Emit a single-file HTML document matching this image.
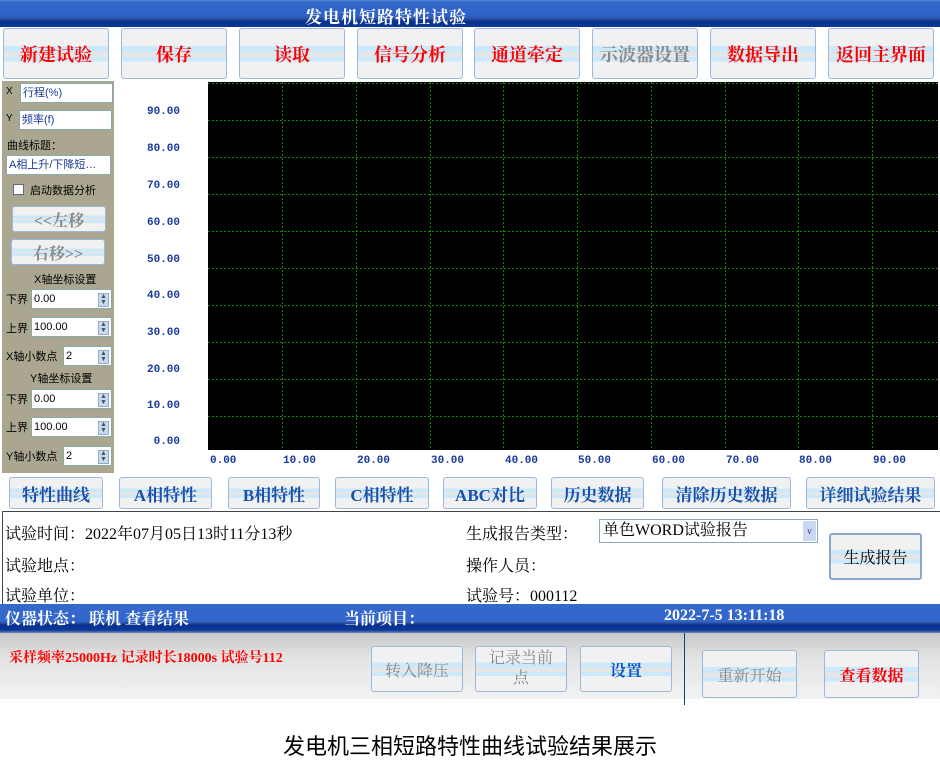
<!DOCTYPE html>
<html><head><meta charset="utf-8"><style>
*{margin:0;padding:0;box-sizing:border-box}
body{width:940px;height:765px;background:#fff;position:relative;overflow:hidden;font-family:"Liberation Serif","Noto Serif CJK SC","Noto Sans CJK SC",serif}
.a{position:absolute}
.btn{position:absolute;border:1px solid #9ab8dc;border-radius:3px;background:linear-gradient(#f1f1f1 0,#f1f1f1 35%,#cbe9fb 35%,#cbe9fb 47%,#e6e6e6 47%,#e6e6e6 57%,#cbe9fb 57%,#cbe9fb 66%,#f1f1f1 66%);display:flex;align-items:center;justify-content:center;font-weight:bold;white-space:nowrap}
.r{color:#f00}.g{color:#888}.b{color:#1a4fa8}
.tb{font-size:18px}
.sm{font-size:11px;font-family:"Liberation Sans","Noto Sans CJK SC",sans-serif;color:#000}
.in{position:absolute;background:#fff;border:1px solid #8aa;font-size:11px;font-family:"Liberation Sans","Noto Sans CJK SC",sans-serif;padding-left:2px;line-height:18px}
.sp{position:absolute;right:2px;top:3px;width:11px;height:14px;background:#c9d9ef;border:1px solid #9ab;font-size:7px;line-height:6px;text-align:center;color:#456}
.yl{position:absolute;left:140px;font-size:11px;font-weight:bold;color:#1a3a9a;font-family:"Liberation Mono",monospace;width:40px;text-align:right}
.xl{position:absolute;top:455px;font-size:11px;font-weight:bold;color:#1a3a9a;font-family:"Liberation Mono",monospace}
.it{position:absolute;font-size:16px;color:#000}
</style></head><body>
<div class="a" style="left:0;top:0;width:940px;height:27px;background:linear-gradient(#5a86d8 0,#3467c9 8%,#2f62c6 60%,#2a4f9a 70%,#083090 80%,#0a3898 100%)"></div>
<div class="a" style="left:305px;top:3px;font-size:17px;font-weight:bold;color:#fff;letter-spacing:1px">发电机短路特性试验</div>

<div class="btn r tb" style="left:3px;top:28px;width:106px;height:51px">新建试验</div>
<div class="btn r tb" style="left:121px;top:28px;width:106px;height:51px">保存</div>
<div class="btn r tb" style="left:239px;top:28px;width:106px;height:51px">读取</div>
<div class="btn r tb" style="left:357px;top:28px;width:106px;height:51px">信号分析</div>
<div class="btn r tb" style="left:474px;top:28px;width:106px;height:51px">通道牵定</div>
<div class="btn g tb" style="left:592px;top:28px;width:106px;height:51px">示波器设置</div>
<div class="btn r tb" style="left:710px;top:28px;width:106px;height:51px">数据导出</div>
<div class="btn r tb" style="left:828px;top:28px;width:106px;height:51px">返回主界面</div>

<div class="a" style="left:2px;top:81px;width:112px;height:392px;background:#aaa690"></div>
<div class="a sm" style="left:6px;top:86px;font-size:10px">X</div>
<div class="in" style="left:20px;top:83px;width:93px;height:20px;color:#1a3a9a">行程(%)</div>
<div class="a sm" style="left:6px;top:113px;font-size:10px">Y</div>
<div class="in" style="left:19px;top:110px;width:93px;height:20px;color:#1a3a9a">频率(f)</div>
<div class="a sm" style="left:7px;top:137px">曲线标题：</div>
<div class="in" style="left:6px;top:155px;width:105px;height:20px;color:#1a3a9a">A相上升/下降短…</div>
<div class="a" style="left:13px;top:184px;width:11px;height:11px;background:#fff;border:1px solid #667"></div>
<div class="a sm" style="left:30px;top:182px">启动数据分析</div>
<div class="btn g" style="left:12px;top:206px;width:94px;height:26px;font-size:16px">&lt;&lt;左移</div>
<div class="btn g" style="left:11px;top:239px;width:94px;height:26px;font-size:16px">右移&gt;&gt;</div>
<div class="a sm" style="left:34px;top:271px">X轴坐标设置</div>
<div class="a sm" style="left:6px;top:291px">下界</div>
<div class="in" style="left:31px;top:289px;width:81px;height:20px">0.00<div class="sp">▲<br>▼</div></div>
<div class="a sm" style="left:6px;top:320px">上界</div>
<div class="in" style="left:31px;top:317px;width:81px;height:20px">100.00<div class="sp">▲<br>▼</div></div>
<div class="a sm" style="left:6px;top:348px">X轴小数点</div>
<div class="in" style="left:63px;top:346px;width:49px;height:20px">2<div class="sp">▲<br>▼</div></div>
<div class="a sm" style="left:30px;top:370px">Y轴坐标设置</div>
<div class="a sm" style="left:6px;top:391px">下界</div>
<div class="in" style="left:31px;top:389px;width:81px;height:20px">0.00<div class="sp">▲<br>▼</div></div>
<div class="a sm" style="left:6px;top:419px">上界</div>
<div class="in" style="left:31px;top:417px;width:81px;height:20px">100.00<div class="sp">▲<br>▼</div></div>
<div class="a sm" style="left:6px;top:448px">Y轴小数点</div>
<div class="in" style="left:63px;top:446px;width:49px;height:20px">2<div class="sp">▲<br>▼</div></div>

<svg class="a" style="left:208px;top:82px" width="730" height="368">
<rect width="730" height="368" fill="#000"/>
<g stroke="#0a8a0a" stroke-width="1" stroke-dasharray="2,2">
<line x1="0" y1="1.5" x2="730" y2="1.5"/>
<line x1="0" y1="38.5" x2="730" y2="38.5"/><line x1="0" y1="75.5" x2="730" y2="75.5"/><line x1="0" y1="112.5" x2="730" y2="112.5"/><line x1="0" y1="149.5" x2="730" y2="149.5"/><line x1="0" y1="186.5" x2="730" y2="186.5"/><line x1="0" y1="223.5" x2="730" y2="223.5"/><line x1="0" y1="260.5" x2="730" y2="260.5"/><line x1="0" y1="297.5" x2="730" y2="297.5"/><line x1="0" y1="334.5" x2="730" y2="334.5"/>
<line x1="74.5" y1="0" x2="74.5" y2="368"/><line x1="148.5" y1="0" x2="148.5" y2="368"/><line x1="222.5" y1="0" x2="222.5" y2="368"/><line x1="295.5" y1="0" x2="295.5" y2="368"/><line x1="369.5" y1="0" x2="369.5" y2="368"/><line x1="443.5" y1="0" x2="443.5" y2="368"/><line x1="517.5" y1="0" x2="517.5" y2="368"/><line x1="590.5" y1="0" x2="590.5" y2="368"/><line x1="664.5" y1="0" x2="664.5" y2="368"/>
</g></svg>
<div class="yl" style="top:106px">90.00</div><div class="yl" style="top:143px">80.00</div><div class="yl" style="top:180px">70.00</div><div class="yl" style="top:217px">60.00</div><div class="yl" style="top:254px">50.00</div><div class="yl" style="top:290px">40.00</div><div class="yl" style="top:327px">30.00</div><div class="yl" style="top:364px">20.00</div><div class="yl" style="top:400px">10.00</div><div class="yl" style="top:436px">0.00</div>
<div class="xl" style="left:210px">0.00</div><div class="xl" style="left:283px">10.00</div><div class="xl" style="left:357px">20.00</div><div class="xl" style="left:431px">30.00</div><div class="xl" style="left:505px">40.00</div><div class="xl" style="left:578px">50.00</div><div class="xl" style="left:652px">60.00</div><div class="xl" style="left:726px">70.00</div><div class="xl" style="left:799px">80.00</div><div class="xl" style="left:873px">90.00</div>

<div class="btn b" style="left:9px;top:477px;width:94px;height:32px;font-size:17px">特性曲线</div>
<div class="btn b" style="left:119px;top:477px;width:93px;height:32px;font-size:17px">A相特性</div>
<div class="btn b" style="left:228px;top:477px;width:92px;height:32px;font-size:17px">B相特性</div>
<div class="btn b" style="left:335px;top:477px;width:94px;height:32px;font-size:17px">C相特性</div>
<div class="btn b" style="left:443px;top:477px;width:94px;height:32px;font-size:17px">ABC对比</div>
<div class="btn b" style="left:551px;top:477px;width:93px;height:32px;font-size:17px">历史数据</div>
<div class="btn b" style="left:662px;top:477px;width:129px;height:32px;font-size:17px">清除历史数据</div>
<div class="btn b" style="left:806px;top:477px;width:129px;height:32px;font-size:17px">详细试验结果</div>

<div class="a" style="left:2px;top:511px;width:938px;height:94px;border:1px solid #444;border-right:none;background:#fff"></div>
<div class="it" style="left:5px;top:521px">试验时间：2022年07月05日13时11分13秒</div>
<div class="it" style="left:5px;top:553px">试验地点：</div>
<div class="it" style="left:5px;top:583px">试验单位：</div>
<div class="it" style="left:466px;top:521px">生成报告类型：</div>
<div class="it" style="left:466px;top:553px">操作人员：</div>
<div class="it" style="left:466px;top:583px">试验号：000112</div>
<div class="a" style="left:599px;top:519px;width:219px;height:24px;border:1px solid #8ab;background:#fff;font-size:16px;padding-left:3px;line-height:22px">单色WORD试验报告<div class="a" style="right:1px;top:1px;width:13px;height:20px;background:#c9d9f3;font-size:9px;line-height:20px;text-align:center;color:#334">v</div></div>
<div class="btn" style="left:829px;top:533px;width:93px;height:47px;font-size:16px;font-weight:normal;border:2px solid #8aa8cc;color:#000">生成报告</div>

<div class="a" style="left:0;top:604px;width:940px;height:29px;background:linear-gradient(#3568cc 0,#3366cc 60%,#2a4f9a 66%,#0a2f8e 72%,#0a3898 90%,#6f8bb8 100%)"></div>
<div class="a" style="left:5px;top:606px;color:#fff;font-size:16px;font-weight:bold">仪器状态： 联机 查看结果</div>
<div class="a" style="left:344px;top:606px;color:#fff;font-size:16px;font-weight:bold">当前项目：</div>
<div class="a" style="left:664px;top:607px;color:#fff;font-size:16px;font-weight:bold">2022-7-5 13:11:18</div>

<div class="a" style="left:0;top:633px;width:940px;height:66px;background:linear-gradient(#c8c8c8,#e4e4e4 40%,#f2f2f2)"></div>
<div class="a" style="left:684px;top:633px;width:1px;height:72px;background:#1a3a8a"></div>
<div class="a" style="left:9px;top:647px;color:#f00;font-size:14px;font-weight:bold">采样频率25000Hz 记录时长18000s 试验号112</div>
<div class="btn g" style="left:371px;top:646px;width:92px;height:46px;font-size:16px;font-weight:normal">转入降压</div>
<div class="btn g" style="left:475px;top:646px;width:92px;height:46px;font-size:16px;font-weight:normal;line-height:20px;white-space:normal;text-align:center">记录当前<br>点</div>
<div class="btn" style="left:580px;top:646px;width:92px;height:46px;font-size:16px;color:#0a58c8">设置</div>
<div class="btn g" style="left:702px;top:650px;width:95px;height:48px;font-size:16px;font-weight:normal">重新开始</div>
<div class="btn r" style="left:824px;top:650px;width:95px;height:48px;font-size:16px">查看数据</div>

<div class="a" style="left:0;top:729px;width:940px;text-align:center;font-size:22px;font-family:'Liberation Sans','Noto Sans CJK SC',sans-serif;color:#000">发电机三相短路特性曲线试验结果展示</div>
</body></html>
